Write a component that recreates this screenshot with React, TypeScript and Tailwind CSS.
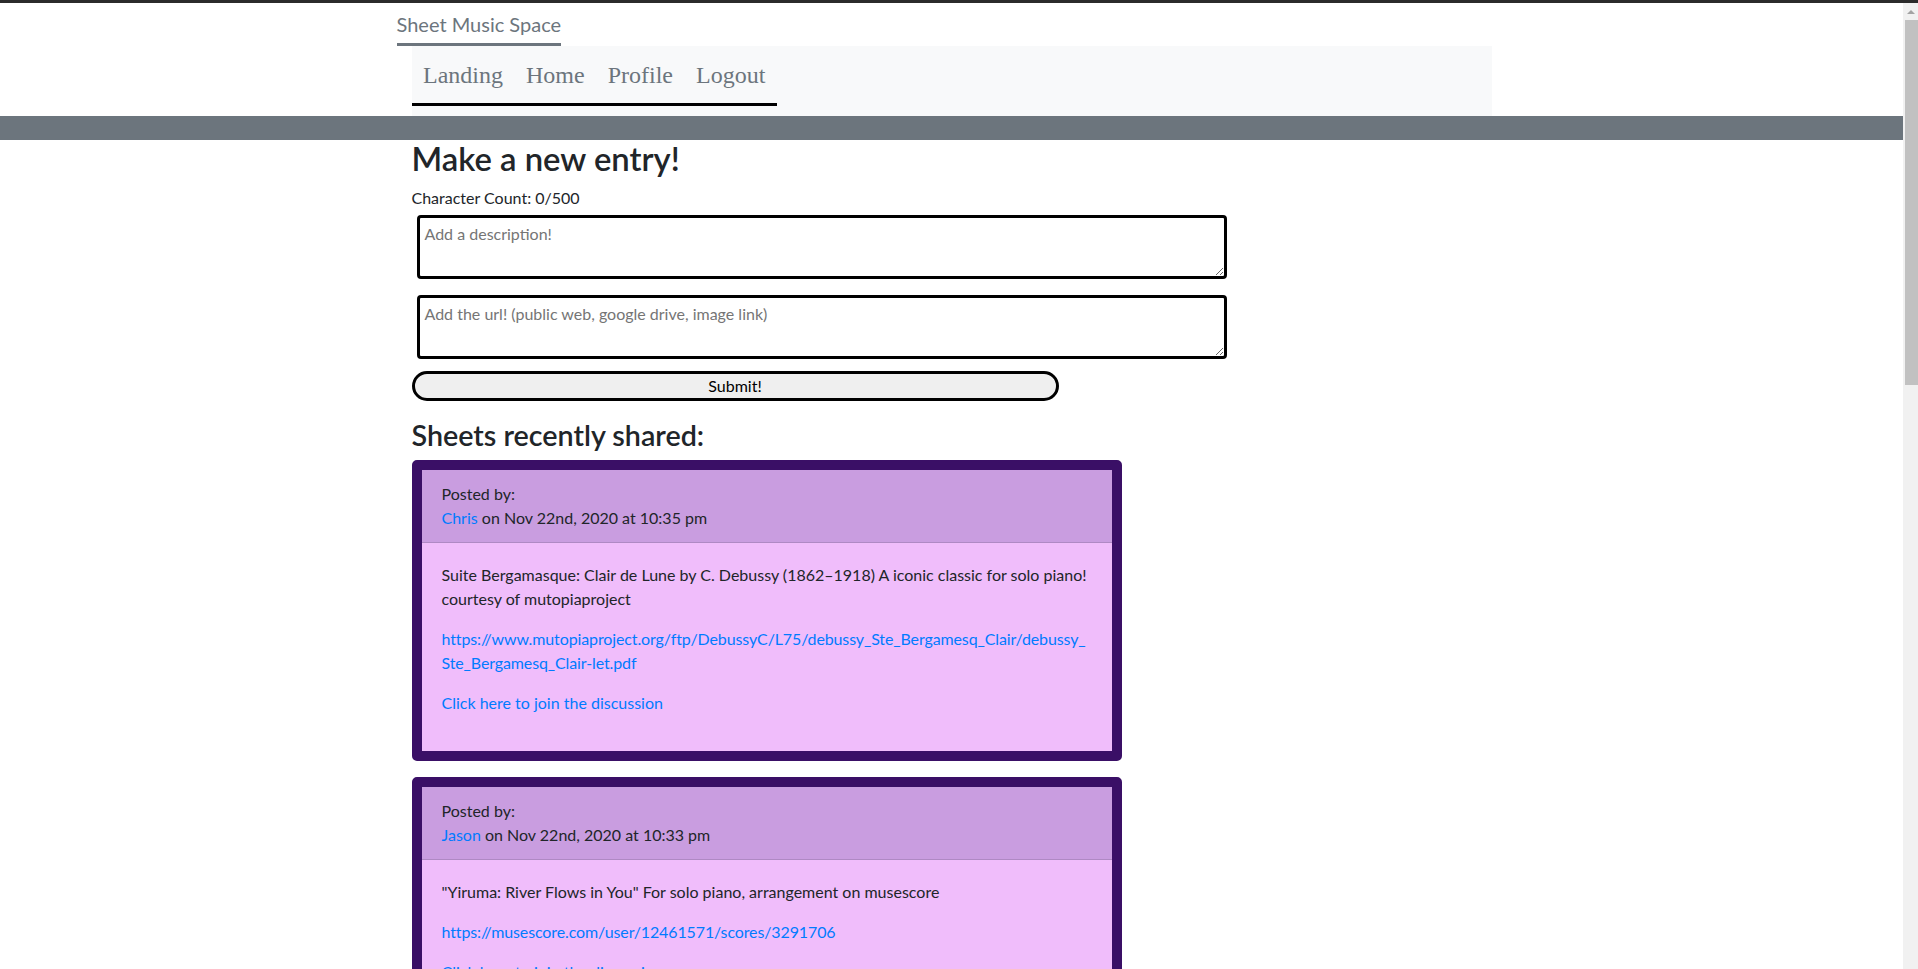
import React from "react";

type Post = {
  author: string;
  date: string;
  text: string;
  url: React.ReactNode;
};

const posts: Post[] = [
  {
    author: "Chris",
    date: "Nov 22nd, 2020 at 10:35 pm",
    text: "Suite Bergamasque: Clair de Lune by C. Debussy (1862–1918) A iconic classic for solo piano! courtesy of mutopiaproject",
    url: (
      <>
        https://www.mutopiaproject.org/ftp/DebussyC/L75/debussy_Ste_Bergamesq_Clair/debussy_
        <wbr />
        Ste_Bergamesq_Clair-let.pdf
      </>
    ),
  },
  {
    author: "Jason",
    date: "Nov 22nd, 2020 at 10:33 pm",
    text: '"Yiruma: River Flows in You" For solo piano, arrangement on musescore',
    url: "https://musescore.com/user/12461571/scores/3291706",
  },
];

const links = ["Landing", "Home", "Profile", "Logout"];

function PostCard({ post }: { post: Post }) {
  return (
    <div className="mb-[16px] w-[710px] rounded-[5px] border-[10px] border-[#3a0f66]">
      <div className="border-b border-black/[0.125] bg-[#c99de0] px-[20px] py-[12px]">
        <div>Posted by:</div>
        <div>
          <a href="#" className="text-[#007bff]">
            {post.author}
          </a>{" "}
          on {post.date}
        </div>
      </div>
      <div className="bg-[#f0bdfb] p-[20px]">
        <p className="mb-[16px]">{post.text}</p>
        <p className="mb-[16px] break-words tracking-[-0.12px]">
          <a href="#" className="text-[#007bff]">
            {post.url}
          </a>
        </p>
        <p className="mb-[16px]">
          <a href="#" className="text-[#007bff]">
            Click here to join the discussion
          </a>
        </p>
      </div>
    </div>
  );
}

// the reference was taken with a classic page scrollbar showing
function Scrollbar() {
  return (
    <div className="w-[15px] shrink-0 bg-[#f1f1f1]">
      <div className="flex h-[17px] items-center justify-center">
        <div className="h-0 w-0 border-x-[4px] border-b-[4px] border-x-transparent border-b-[#a3a3a3]" />
      </div>
      <div className="ml-[2px] h-[365px] w-[13px] bg-[#c1c1c1]" />
    </div>
  );
}

export default function App() {
  return (
    <div className="min-h-screen bg-white font-['Lato',sans-serif] text-[16px] leading-[24px] text-[#212529]">
      <div className="h-[3px] bg-[#2b2b2b]" />
      <div className="flex">
        <div className="min-w-0 flex-1">
          {/* brand + nav */}
          <div className="mx-auto max-w-[1140px] px-[15px]">
            <div className="inline-block border-b-[3px] border-[#6c757d] pb-[4px] pt-[6px] text-[20px] leading-[30px] text-[#6c757d]">
              Sheet Music Space
            </div>
            <div className="mx-[15px] h-[70px] bg-[#f8f9fa] pt-[15px]">
              <ul className="inline-flex border-b-[3px] border-black pb-[14px] font-['Liberation_Serif',serif] text-[24px] leading-[28px] text-[#6c757d]">
                {links.map((l) => (
                  <li key={l}>
                    <a href="#" className="px-[11.5px]">
                      {l}
                    </a>
                  </li>
                ))}
              </ul>
            </div>
          </div>
          <div className="h-[24px] bg-[#6c757d]" />

          {/* form + feed */}
          <div className="mx-auto max-w-[1140px] px-[30px]">
            <h2 className="mb-[8px] text-[32.8px] font-semibold leading-[38px]">Make a new entry!</h2>
            <div>Character Count: 0/500</div>
            <textarea
              className="ml-[5px] mt-[5px] block h-[64px] w-[810px] rounded-[4px] border-[3px] border-black px-[5px] py-[4px] placeholder:text-[#757575]"
              placeholder="Add a description!"
            />
            <textarea
              className="ml-[5px] mt-[16px] block h-[64px] w-[810px] rounded-[4px] border-[3px] border-black px-[5px] py-[4px] placeholder:text-[#757575]"
              placeholder="Add the url! (public web, google drive, image link)"
            />
            <button className="mt-[12px] block h-[30px] w-[647px] rounded-full border-[3px] border-black bg-[#efefef] text-[16px] font-normal leading-[24px] text-black">
              Submit!
            </button>

            <h3 className="mb-[8px] mt-[17px] text-[28.7px] font-semibold leading-[34px]">Sheets recently shared:</h3>
            {posts.map((p) => (
              <PostCard key={p.author} post={p} />
            ))}
          </div>
        </div>
        <Scrollbar />
      </div>
    </div>
  );
}
